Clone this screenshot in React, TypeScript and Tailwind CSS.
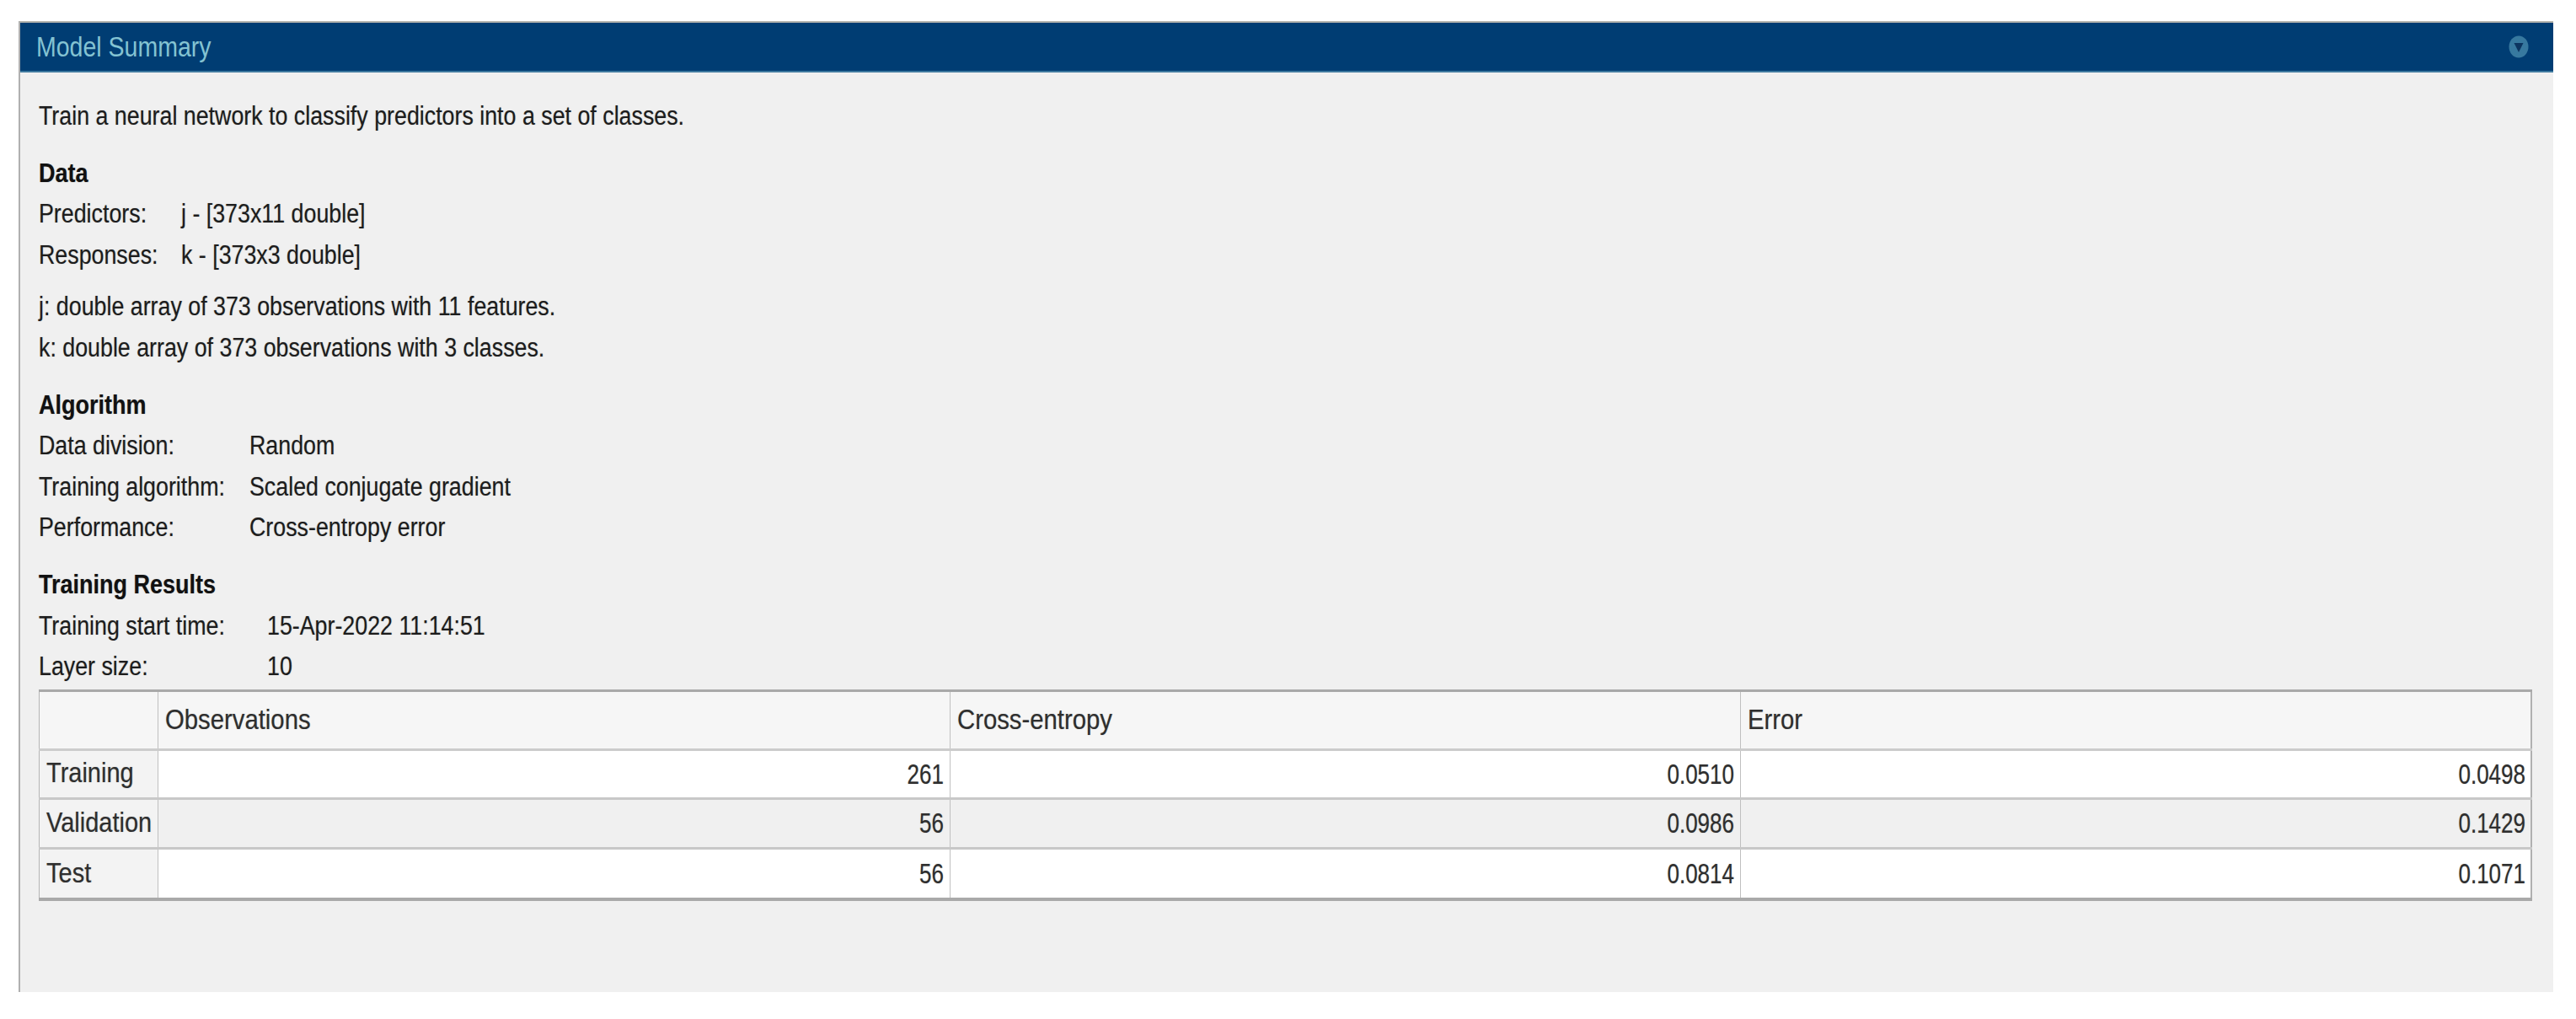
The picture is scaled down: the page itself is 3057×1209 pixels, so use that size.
const sans = "font-['Liberation_Sans',Arial,sans-serif]";

function Tall({ children, className = "" }: { children: React.ReactNode; className?: string }) {
    return <span className={`inline-block origin-center whitespace-pre [text-shadow:0_0_1px_#55555580] ${className}`}>{children}</span>;
}

function Heading({ children, className = "" }: { children: React.ReactNode; className?: string }) {
    return (
        <div className={`flex h-[48px] items-center text-[27px] font-bold text-[#111111] ${className}`}>
            <Tall className="scale-y-[1.18]">{children}</Tall>
        </div>
    );
}

function Line({ children, className = "" }: { children: React.ReactNode; className?: string }) {
    return (
        <div className={`flex h-[48.5px] items-center text-[26.8px] text-[#1c1c1c] ${className}`}>
            <Tall className="scale-y-[1.18]">{children}</Tall>
        </div>
    );
}

function Field({ label, value, labelWidth }: { label: string; value: string; labelWidth: string }) {
    return (
        <div className="flex h-[48.5px] items-center text-[26.8px] text-[#1c1c1c]">
            <div className={labelWidth}>
                <Tall className="scale-y-[1.18]">{label}</Tall>
            </div>
            <Tall className="scale-y-[1.18]">{value}</Tall>
        </div>
    );
}

const rows = [
    { name: "Training", obs: "261", ce: "0.0510", err: "0.0498", height: "h-[58px]", bg: "bg-white" },
    { name: "Validation", obs: "56", ce: "0.0986", err: "0.1429", height: "h-[59px]", bg: "bg-[#f0f0f0]" },
    { name: "Test", obs: "56", ce: "0.0814", err: "0.1071", height: "h-[61px]", bg: "bg-white" },
];

function ResultsTable() {
    return (
        <table className="mt-[3px] w-[2959px] table-fixed border-collapse border-t-[3px] border-r-2 border-b-[4px] border-l border-t-[#a9a9a9] border-r-[#b0b0b0] border-b-[#a9a9a9] border-l-[#b5b5b5] text-[#2e2e2e]">
            <colgroup>
                <col className="w-[141px]" />
                <col className="w-[940px]" />
                <col className="w-[938px]" />
                <col />
            </colgroup>
            <thead>
                <tr className="h-[70px] border-b-[3px] border-[#cccccc] bg-[#f6f6f6] text-left text-[29.3px] font-normal">
                    <th className="border-r border-[#c0c0c0]"></th>
                    <th className="border-r border-[#c0c0c0] pl-[8px] font-normal"><Tall className="scale-y-[1.14]">Observations</Tall></th>
                    <th className="border-r border-[#c0c0c0] pl-[8px] font-normal"><Tall className="scale-y-[1.14]">Cross-entropy</Tall></th>
                    <th className="pl-[8px] font-normal"><Tall className="scale-y-[1.14]">Error</Tall></th>
                </tr>
            </thead>
            <tbody>
                {rows.map(row => (
                    <tr key={row.name} className={`${row.height} border-b-[3px] border-[#c8c8c8] ${row.bg} text-[26px] last:border-b-0`}>
                        <td className="border-r border-[#c0c0c0] bg-[#f3f3f3] pl-[8px] text-[29px]"><Tall className="scale-y-[1.16]">{row.name}</Tall></td>
                        <td className="border-r border-[#c0c0c0] pr-[7px] text-right"><Tall className="scale-y-[1.3]">{row.obs}</Tall></td>
                        <td className="border-r border-[#c0c0c0] pr-[7px] text-right"><Tall className="scale-y-[1.3]">{row.ce}</Tall></td>
                        <td className="pr-[6px] text-right"><Tall className="scale-y-[1.3]">{row.err}</Tall></td>
                    </tr>
                ))}
            </tbody>
        </table>
    );
}

export default function App() {
    return (
        <div className={`h-[1209px] w-[3057px] overflow-hidden bg-white pt-[25px] pl-[22px] ${sans}`}>
            <div className="flex h-[1152px] w-[3008px] flex-col border-t-2 border-l-2 border-t-[#b4b4ae] border-l-[#b0b0b0] bg-[#f0f0f0]">
                <div className="flex h-[59px] shrink-0 items-center justify-between border-b-2 border-b-[#3f7a9f] bg-[#003d73] pr-[29px] pl-[19px]">
                    <span className="inline-block origin-center scale-y-[1.16] whitespace-pre text-[28.5px] text-[#84c3d2]">Model Summary</span>
                    <svg width="24" height="27" viewBox="0 0 24 27" aria-hidden="true">
                        <ellipse cx="12" cy="13.5" rx="11.5" ry="13" fill="#37799f" />
                        <path d="M6.5 9 H17.5 L12 20 Z" fill="#0c3560" />
                    </svg>
                </div>
                <div className="flex flex-col pt-[27px] pl-[22px]">
                    <Line className="h-[48px]">Train a neural network to classify predictors into a set of classes.</Line>
                    <Heading className="mt-[20px]">Data</Heading>
                    <Field label="Predictors:" value="j - [373x11 double]" labelWidth="w-[169px]" />
                    <Field label="Responses:" value="k - [373x3 double]" labelWidth="w-[169px]" />
                    <Line className="mt-[13px]">j: double array of 373 observations with 11 features.</Line>
                    <Line>k: double array of 373 observations with 3 classes.</Line>
                    <Heading className="mt-[20px]">Algorithm</Heading>
                    <Field label="Data division:" value="Random" labelWidth="w-[250px]" />
                    <Field label="Training algorithm:" value="Scaled conjugate gradient" labelWidth="w-[250px]" />
                    <Field label="Performance:" value="Cross-entropy error" labelWidth="w-[250px]" />
                    <Heading className="mt-[20px]">Training Results</Heading>
                    <Field label="Training start time:" value="15-Apr-2022 11:14:51" labelWidth="w-[271px]" />
                    <Field label="Layer size:" value="10" labelWidth="w-[271px]" />
                    <ResultsTable />
                </div>
            </div>
        </div>
    );
}
